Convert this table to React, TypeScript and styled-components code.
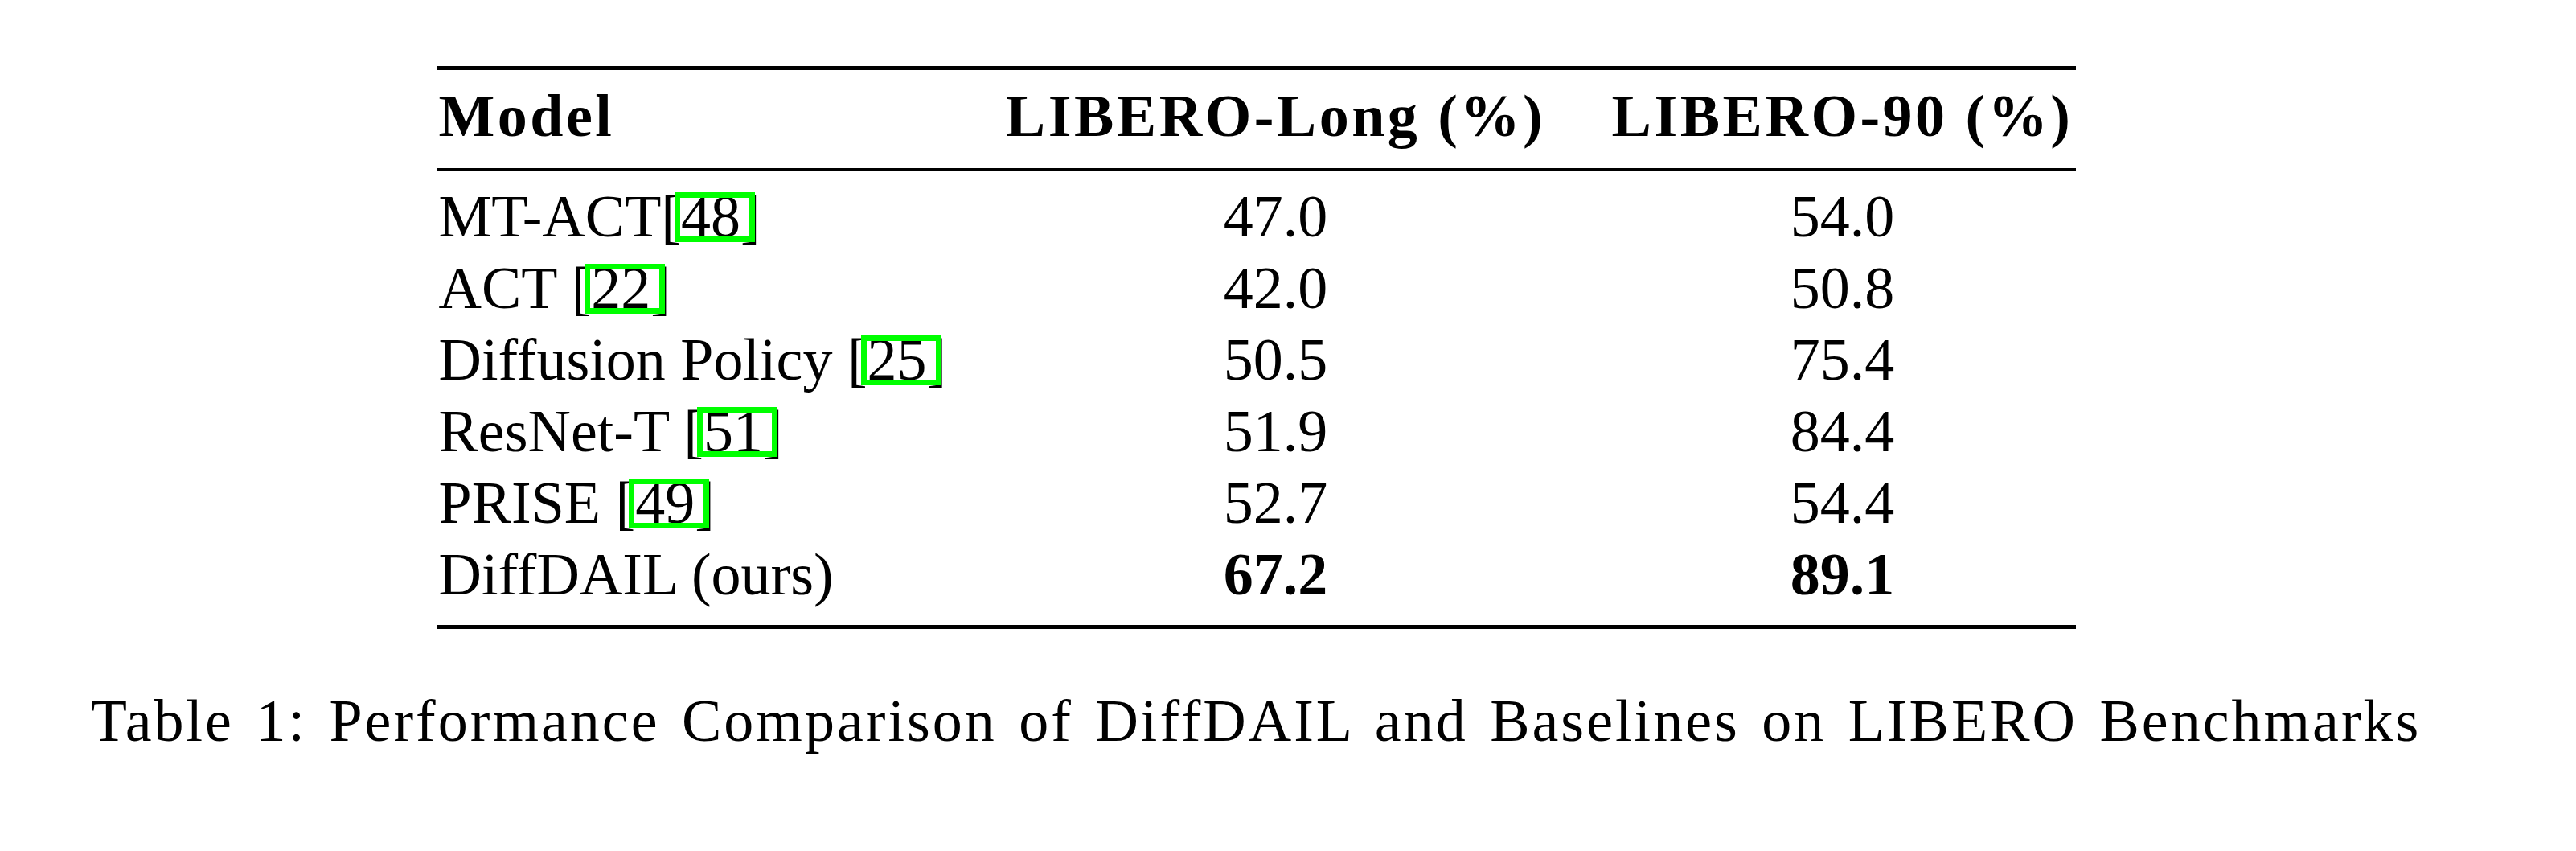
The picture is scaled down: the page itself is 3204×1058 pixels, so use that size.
import styled, { createGlobalStyle } from "styled-components";

const GlobalStyle = createGlobalStyle`
  html, body {
    margin: 0;
    padding: 0;
    background: #fff;
  }
  body {
    font-family: "Liberation Serif", "Times New Roman", serif;
    color: #000;
  }
`;

interface Resultado {
  modelo: string;
  cite?: string;
  colado?: boolean;
  longo: string;
  noventa: string;
  destaque?: boolean;
}

const resultados: Resultado[] = [
  { modelo: "MT-ACT", cite: "48", colado: true, longo: "47.0", noventa: "54.0" },
  { modelo: "ACT", cite: "22", longo: "42.0", noventa: "50.8" },
  { modelo: "Diffusion Policy", cite: "25", longo: "50.5", noventa: "75.4" },
  { modelo: "ResNet-T", cite: "51", longo: "51.9", noventa: "84.4" },
  { modelo: "PRISE", cite: "49", longo: "52.7", noventa: "54.4" },
  { modelo: "DiffDAIL (ours)", longo: "67.2", noventa: "89.1", destaque: true },
];

export default function App() {
  return (
    <>
      <GlobalStyle />
      <Pagina>
        <Tabela>
          <Cabecalho>
            <Linha>
              <Celula>Model</Celula>
              <Celula $centro>LIBERO-Long (%)</Celula>
              <Celula $centro>LIBERO-90 (%)</Celula>
            </Linha>
          </Cabecalho>
          <Corpo>
            {resultados.map((r) => (
              <Linha key={r.modelo}>
                <Celula>
                  {r.modelo}
                  {r.cite && (
                    <>
                      {r.colado ? "" : " "}[<LinkBox>{r.cite}</LinkBox>]
                    </>
                  )}
                </Celula>
                <Celula $centro $negrito={r.destaque}>{r.longo}</Celula>
                <Celula $centro $negrito={r.destaque}>{r.noventa}</Celula>
              </Linha>
            ))}
          </Corpo>
        </Tabela>
        <Legenda>
          Table 1: Performance Comparison of DiffDAIL and Baselines on LIBERO Benchmarks
        </Legenda>
      </Pagina>
    </>
  );
}

const Pagina = styled.div`
  width: 3124px;
  height: 1058px;
  box-sizing: border-box;
  padding-top: 82px;
  display: flex;
  flex-direction: column;
  align-items: center;
`;

const Tabela = styled.div`
  width: 2039px;
  border-top: 5px solid #000;
  border-bottom: 5px solid #000;
  font-size: 74px;
  line-height: 89px;
`;

const Cabecalho = styled.div`
  padding: 13px 0 20px;
  border-bottom: 4px solid #000;
  font-weight: 700;
  letter-spacing: 3.5px;
`;

const Corpo = styled.div`
  padding: 12px 0 18px;
`;

const Linha = styled.div`
  display: grid;
  grid-template-columns: 667px 754px 1fr;

  & > :nth-child(3) {
    padding-left: 38px;
  }
`;

const Celula = styled.div<{ $centro?: boolean; $negrito?: boolean }>`
  white-space: nowrap;
  text-align: ${(p) => (p.$centro ? "center" : "left")};
  font-weight: ${(p) => (p.$negrito ? 700 : "inherit")};
  padding-left: ${(p) => (p.$centro ? "0" : "3px")};
`;

const LinkBox = styled.span`
  position: relative;

  &::after {
    content: "";
    position: absolute;
    left: -8px;
    right: -18px;
    top: 11px;
    bottom: 9px;
    border: 7px solid #00ff00;
  }
`;

const Legenda = styled.div`
  margin-top: 70px;
  font-size: 74px;
  line-height: 89px;
  letter-spacing: 3px;
  word-spacing: 6px;
  white-space: nowrap;
`;
